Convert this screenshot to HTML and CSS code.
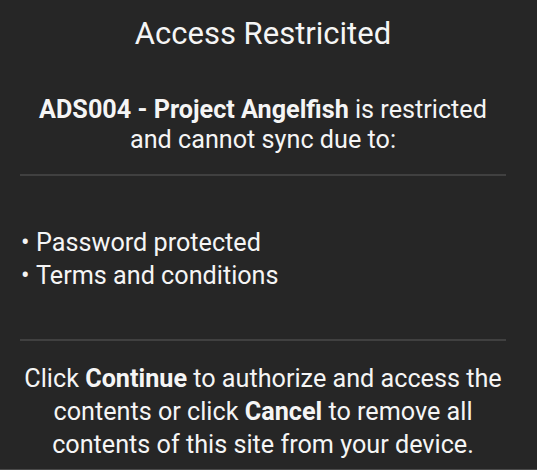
FILE: index.html
```html
<!DOCTYPE html>
<html>
<head>
<meta charset="utf-8">
<link rel="stylesheet" href="styles.css">
</head>
<body>
<div class="dialog">
  <h1 class="title">Access Restricited</h1>
  <p class="intro"><b>ADS004 - Project Angelfish</b> is restricted and cannot sync due to:</p>
  <hr class="divider">
  <ul class="reasons">
    <li>Password protected</li>
    <li>Terms and conditions</li>
  </ul>
  <hr class="divider">
  <p class="note">Click <b>Continue</b> to authorize and access the contents or click <b>Cancel</b> to remove all contents of this site from your device.</p>
</div>
</body>
</html>
```
FILE: styles.css
```css
html, body {
  margin: 0;
  padding: 0;
  background: #262626;
}
body {
  height: 470px;
  overflow: hidden;
  border-bottom: 1px solid #4a4a4a;
  box-sizing: border-box;
}
.dialog {
  padding: 0 31px 0 20px;
  font-family: Roboto, "Noto Sans", sans-serif;
  color: #f5f5f5;
}
.title {
  margin: 14px 0 0;
  font-size: 31px;
  font-weight: 400;
  line-height: 40px;
  text-align: center;
}
.intro {
  margin: 41px 0 0;
  font-size: 25.2px;
  line-height: 30px;
  text-align: center;
}
.intro b, .note b {
  font-weight: 700;
}
.divider {
  margin: 19px 0 0;
  border: 0;
  height: 2px;
  background: #404040;
}
.reasons {
  list-style: none;
  margin: 51px 0 0;
  padding: 0;
  font-size: 25.2px;
  line-height: 32.5px;
}
.reasons li {
  display: flex;
  align-items: baseline;
}
.reasons li::before {
  content: "•";
  width: 16px;
  padding-left: 1px;
  box-sizing: border-box;
}
.reasons + .divider {
  margin-top: 47px;
}
.note {
  margin: 21px 0 0;
  font-size: 25.2px;
  line-height: 33px;
  text-align: center;
}
```
